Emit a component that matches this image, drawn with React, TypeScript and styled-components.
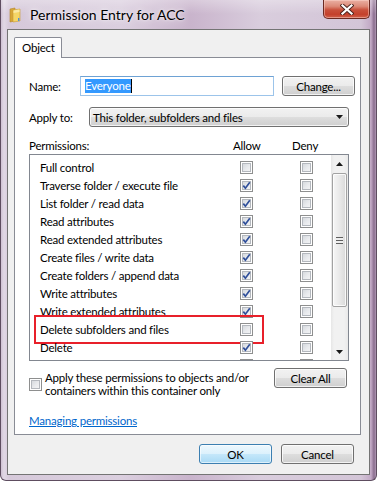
import React from "react";
import styled, { createGlobalStyle, css } from "styled-components";

const UI_FONT = `"Lato", "Open Sans", sans-serif`;

const GlobalStyle = createGlobalStyle`
  html, body {
    margin: 0;
    padding: 0;
    background: #ffffff;
  }
  body {
    font-family: ${UI_FONT};
    font-size: 11.5px;
    letter-spacing: -0.2px;
    color: #000;
  }
  * {
    box-sizing: border-box;
  }
`;

const Window = styled.div`
  width: 377px;
  height: 481px;
  display: flex;
  flex-direction: column;
  padding: 0 6px 5px 6px;
  border: 1px solid #5e4d60;
  border-top: none;
  border-radius: 0 0 6px 6px;
  background:
    linear-gradient(180deg, rgba(255, 255, 255, 0.3) 0, rgba(255, 255, 255, 0) 14px),
    linear-gradient(
      90deg,
      #cfc1d3 0,
      #e1d8e5 3px,
      #d6c9da 8px,
      #dbcfdf 120px,
      #c9b4cc 190px,
      #d9cddd 260px,
      #d3c5d7 360px,
      #c2a9c5 370px,
      #8a6d8e 373px,
      #c4afc8 376px
    );
`;

const TitleBar = styled.div`
  height: 29px;
  display: flex;
  align-items: center;
`;

const Title = styled.span`
  margin-left: 7px;
  font-size: 14px;
  letter-spacing: 0;
  color: #000;
  text-shadow: 0 0 8px rgba(255, 255, 255, 0.95), 0 0 3px rgba(255, 255, 255, 0.8);
`;

const CloseButton = styled.div`
  margin-left: auto;
  align-self: flex-start;
  width: 47px;
  height: 19px;
  display: flex;
  align-items: center;
  justify-content: center;
  border: 1px solid #6b2a22;
  border-top: none;
  border-radius: 0 0 5px 5px;
  background: linear-gradient(180deg, #eab0a3 0%, #dc8a78 35%, #c9503b 55%, #c4412c 80%, #d0614c 100%);
  box-shadow: inset 0 0 0 1px rgba(255, 220, 210, 0.45);
`;

const Client = styled.div`
  flex: 1;
  display: flex;
  flex-direction: column;
  border: 1px solid #747474;
  background: #f0f0f0;
  padding: 7px 8px 0 6px;
`;

const TabStrip = styled.div`
  display: flex;
`;

const Tab = styled.div`
  position: relative;
  z-index: 1;
  width: 48px;
  height: 21px;
  margin-bottom: -1px;
  padding-left: 7px;
  line-height: 19px;
  background: #fff;
  border: 1px solid #898c95;
  border-bottom: none;
  border-radius: 2px 2px 0 0;
`;

const TabPanel = styled.div`
  height: 378px;
  display: flex;
  flex-direction: column;
  padding: 18px 12px 0 14px;
  background: #fff;
  border: 1px solid #898c95;
`;

const NameRow = styled.div`
  display: grid;
  grid-template-columns: 43px 194px 73px;
  column-gap: 8px;
  align-items: center;
  height: 20px;
`;

const ApplyRow = styled.div`
  display: grid;
  grid-template-columns: 60px 260px;
  align-items: center;
  height: 20px;
  margin-top: 11px;
`;

const TextBox = styled.div`
  height: 20px;
  display: flex;
  align-items: center;
  padding-left: 4px;
  border: 1px solid #9cc4ea;
  border-top-color: #6ea2d4;
  background: #fff;
`;

const Selection = styled.span`
  position: relative;
  height: 14px;
  line-height: 14px;
  background: #3399ff;
  color: #fff;
  &::after {
    content: "";
    position: absolute;
    right: -1px;
    top: 0;
    width: 1px;
    height: 14px;
    background: #000;
  }
`;

const buttonFace = css`
  border: 1px solid #707070;
  border-radius: 3px;
  background: linear-gradient(180deg, #f2f2f2 0%, #ebebeb 48%, #dddddd 52%, #cfcfcf 100%);
  box-shadow: inset 0 0 0 1px rgba(255, 255, 255, 0.75);
`;

const Button = styled.button<{ $default?: boolean }>`
  width: 73px;
  height: 20px;
  padding: 0;
  font-family: ${UI_FONT};
  font-size: 11.5px;
  letter-spacing: -0.2px;
  color: #000;
  ${buttonFace}
  ${(p) =>
    p.$default &&
    css`
      border-color: #3c7fb1;
      background: linear-gradient(180deg, #eef8fe 0%, #dcf1fc 48%, #c4e7fa 52%, #a9daf5 100%);
      box-shadow: inset 0 0 0 1px rgba(255, 255, 255, 0.6);
    `}
`;

const Combo = styled.div`
  height: 20px;
  display: flex;
  align-items: center;
  justify-content: space-between;
  padding: 0 5px 0 3px;
  ${buttonFace}
`;

const PermHeader = styled.div`
  display: grid;
  grid-template-columns: 204px 59px auto;
  align-items: center;
  height: 16px;
  margin-top: 10px;
`;

const ListBox = styled.div`
  display: flex;
  width: 320px;
  height: 207px;
  margin-top: 1px;
  border: 1px solid #828790;
  background: #fff;
`;

const Rows = styled.div`
  flex: 1;
  padding-top: 3px;
  overflow: hidden;
`;

const PermRow = styled.div<{ $highlight?: boolean }>`
  position: relative;
  display: grid;
  grid-template-columns: 200px 13px 47px 13px;
  align-items: center;
  height: 18px;
  padding-left: 10px;
  white-space: nowrap;
  ${(p) =>
    p.$highlight &&
    css`
      &::after {
        content: "";
        position: absolute;
        left: 4px;
        top: -5px;
        width: 226px;
        height: 25px;
        border: 2px solid #e8202a;
        pointer-events: none;
      }
    `}
`;

const CheckBox = styled.span`
  width: 13px;
  height: 13px;
  display: flex;
  align-items: center;
  justify-content: center;
  border: 1px solid #8e8f8f;
  background: linear-gradient(135deg, #cdd1d6 0%, #e9ebee 55%, #f8f8f8 100%);
  box-shadow: inset 0 0 0 1px #fff, inset 0 0 0 2px #b4b8be;
`;

const ScrollBar = styled.div`
  width: 17px;
  display: flex;
  flex-direction: column;
  background: linear-gradient(90deg, #e6e6e6 0, #f1f1f1 3px, #f1f1f1 13px, #e9e9e9 17px);
`;

const ScrollArrow = styled.div`
  height: 17px;
  display: flex;
  align-items: center;
  justify-content: center;
`;

const Thumb = styled.div`
  height: 134px;
  margin: 1px 1px 0 1px;
  display: flex;
  align-items: center;
  justify-content: center;
  border: 1px solid #a2a2a2;
  border-radius: 2px;
  background: linear-gradient(90deg, #f6f6f6 0%, #e9e9e9 50%, #d9d9d9 100%);
  box-shadow: inset 0 0 0 1px rgba(255, 255, 255, 0.8);
`;

const Grip = styled.div`
  width: 7px;
  height: 7px;
  background: repeating-linear-gradient(180deg, #5f5f5f 0, #5f5f5f 1px, #eeeeee 1px, #eeeeee 3px);
`;

const Track = styled.div`
  flex: 1;
`;

const OptionRow = styled.div`
  display: flex;
  justify-content: space-between;
  align-items: flex-start;
  width: 318px;
  margin-top: 7px;
`;

const CheckOption = styled.div`
  display: flex;
  align-items: center;
  gap: 3px;
  margin-top: 3px;
`;

const OptionText = styled.span`
  line-height: 13px;
`;

const HelpLink = styled.a`
  align-self: flex-start;
  margin-top: 17px;
  line-height: 14px;
  color: #0066cc;
  text-decoration: underline;
  cursor: pointer;
`;

const Footer = styled.div`
  display: flex;
  justify-content: flex-end;
  gap: 9px;
  padding: 9px 7px 10px 0;
`;

// only the rows that reach into the visible part of the list
const PERMISSIONS = [
  { name: "Full control", allow: false },
  { name: "Traverse folder / execute file", allow: true },
  { name: "List folder / read data", allow: true },
  { name: "Read attributes", allow: true },
  { name: "Read extended attributes", allow: true },
  { name: "Create files / write data", allow: true },
  { name: "Create folders / append data", allow: true },
  { name: "Write attributes", allow: true },
  { name: "Write extended attributes", allow: true },
  { name: "Delete subfolders and files", allow: false, highlight: true },
  { name: "Delete", allow: true },
  { name: "Read permissions", allow: true },
];

const FolderIcon = () => (
  <svg width="14" height="16" viewBox="0 0 14 16" style={{ marginLeft: 2 }}>
    <path d="M1 2 L6 1 L6 14 L1 15 Z" fill="#d7a637" stroke="#b5862a" strokeWidth="0.6" />
    <path d="M4 3 L11 2 L11 14 L4 15 Z" fill="#f5d667" stroke="#c99a34" strokeWidth="0.6" />
    <path d="M4.5 3.5 L10.5 2.6 L10.5 5 L4.5 6 Z" fill="#fbe9a4" />
    <rect x="9" y="11" width="1.4" height="3" fill="#4f8fd6" />
  </svg>
);

const CloseGlyph = () => (
  <svg width="14" height="11" viewBox="0 0 14 11">
    <path d="M2.5 1.5 L11.5 9.5 M11.5 1.5 L2.5 9.5" stroke="#4a221c" strokeWidth="4" strokeLinecap="square" />
    <path d="M2.5 1.5 L11.5 9.5 M11.5 1.5 L2.5 9.5" stroke="#ffffff" strokeWidth="2.2" strokeLinecap="square" />
  </svg>
);

const CheckMark = () => (
  <svg width="9" height="9" viewBox="0 0 9 9">
    <path d="M1.3 4.6 L3.4 7.2 L7.8 1.2" fill="none" stroke="#2f4f9a" strokeWidth="1.7" />
  </svg>
);

const Check = ({ checked }: { checked?: boolean }) => (
  <CheckBox>{checked && <CheckMark />}</CheckBox>
);

const Arrow = ({ up }: { up?: boolean }) => (
  <svg width="7" height="4" viewBox="0 0 7 4">
    <path d={up ? "M0 4 L3.5 0 L7 4 Z" : "M0 0 L3.5 4 L7 0 Z"} fill="#1a1a1a" />
  </svg>
);

export default function App() {
  return (
    <>
      <GlobalStyle />
      <Window>
        <TitleBar>
          <FolderIcon />
          <Title>Permission Entry for ACC</Title>
          <CloseButton>
            <CloseGlyph />
          </CloseButton>
        </TitleBar>
        <Client>
          <TabStrip>
            <Tab>Object</Tab>
          </TabStrip>
          <TabPanel>
            <NameRow>
              <span>Name:</span>
              <TextBox>
                <Selection>Everyone</Selection>
              </TextBox>
              <Button>Change...</Button>
            </NameRow>
            <ApplyRow>
              <span>Apply to:</span>
              <Combo>
                <span>This folder, subfolders and files</span>
                <Arrow />
              </Combo>
            </ApplyRow>
            <PermHeader>
              <span>Permissions:</span>
              <span>Allow</span>
              <span>Deny</span>
            </PermHeader>
            <ListBox>
              <Rows>
                {PERMISSIONS.map((p) => (
                  <PermRow key={p.name} $highlight={p.highlight}>
                    <span>{p.name}</span>
                    <Check checked={p.allow} />
                    <span />
                    <Check />
                  </PermRow>
                ))}
              </Rows>
              <ScrollBar>
                <ScrollArrow>
                  <Arrow up />
                </ScrollArrow>
                <Thumb>
                  <Grip />
                </Thumb>
                <Track />
                <ScrollArrow>
                  <Arrow />
                </ScrollArrow>
              </ScrollBar>
            </ListBox>
            <OptionRow>
              <CheckOption>
                <Check />
                <OptionText>
                  Apply these permissions to objects and/or
                  <br />
                  containers within this container only
                </OptionText>
              </CheckOption>
              <Button>Clear All</Button>
            </OptionRow>
            <HelpLink>Managing permissions</HelpLink>
          </TabPanel>
          <Footer>
            <Button $default>OK</Button>
            <Button>Cancel</Button>
          </Footer>
        </Client>
      </Window>
    </>
  );
}
